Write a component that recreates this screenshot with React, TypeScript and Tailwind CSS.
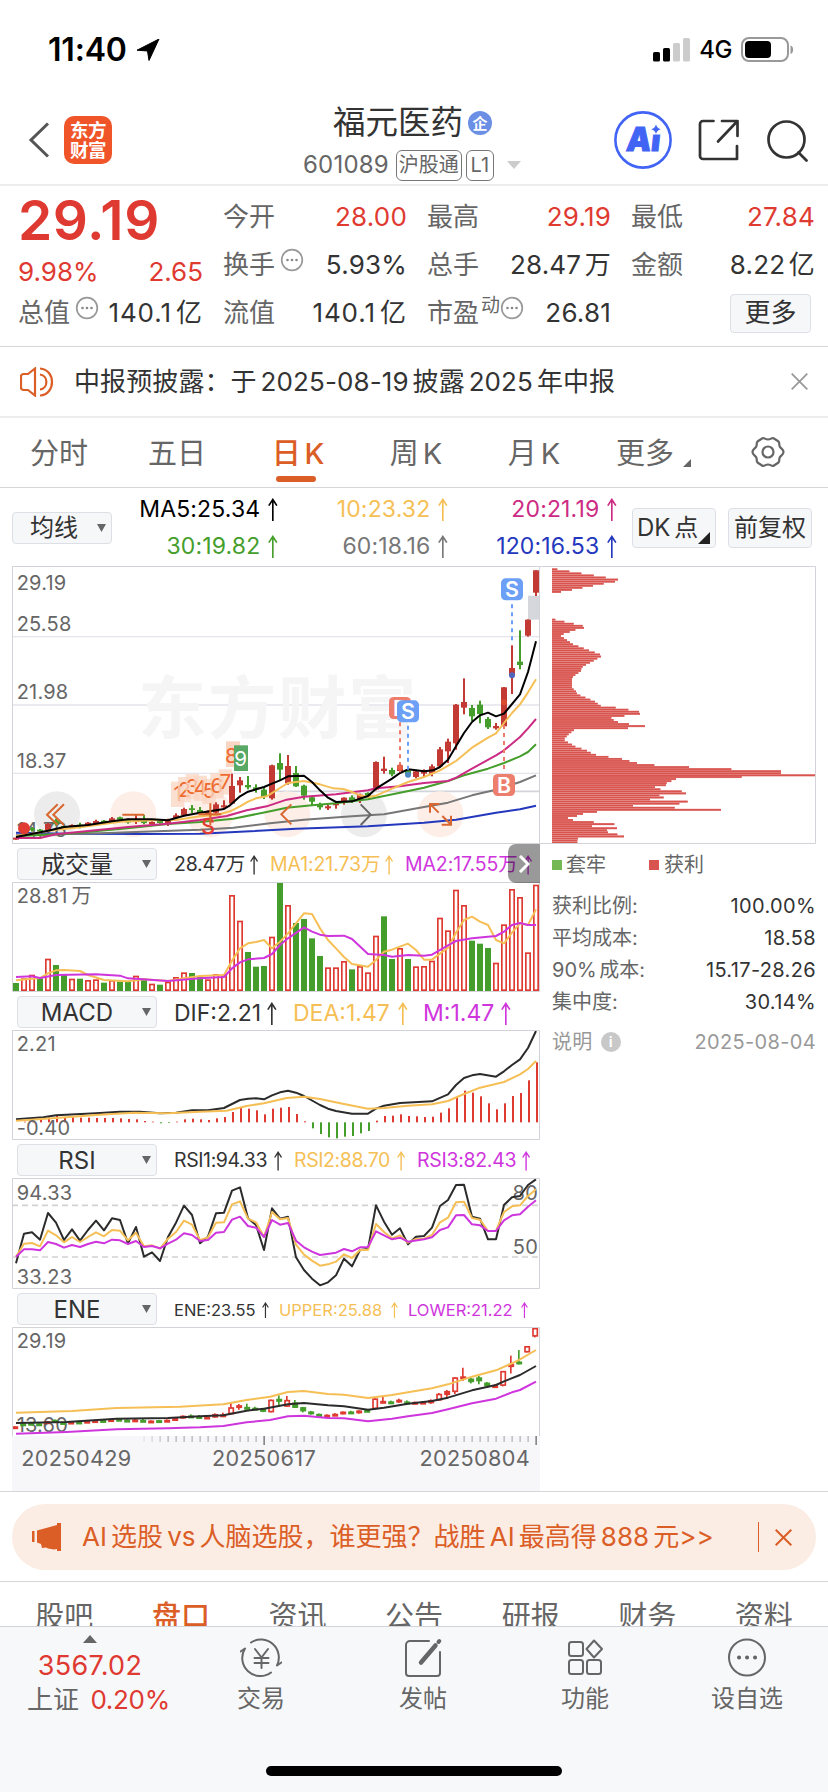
import React from "react";

type Point = [number, number];
// [high, bodyTop, bodyBottom, low, rising]
type Candle = [number, number, number, number, 0 | 1];

const FONT = "font-[Inter,'Noto_Sans_CJK_SC',sans-serif]";

// Every chart is drawn on a grid with one trading day per 24 units
const STEP = 24;
const FIRST_X = 48;

const RED = "#c23a33";
const BRIGHT_RED = "#df3a31";
const GREEN = "#459e2b";
const YELLOW = "#f5bf55";
const PURPLE = "#cf35dd";
const MAGENTA = "#cc2b83";
const BLUE = "#2438bd";

const candles: Candle[] = [
	[832, 832, 838, 838, 1], [806, 808, 813, 815, 0], [800, 804, 810, 814, 0], [806, 808, 813, 815, 0],
	[788, 791, 809, 810, 1], [775, 780, 792, 796, 0], [796, 797, 802, 804, 0], [792, 794, 800, 801, 1],
	[787, 793, 801, 804, 0], [785, 787, 794, 796, 1], [778, 782, 790, 792, 1], [779, 781, 786, 788, 0],
	[770, 774, 783, 786, 1], [769, 771, 778, 780, 0], [774, 778, 786, 790, 0], [764, 776, 785, 791, 1],
	[764, 780, 788, 792, 0], [783, 785, 792, 795, 1], [779, 782, 788, 790, 0], [775, 779, 791, 797, 1],
	[759, 765, 773, 776, 1], [742, 746, 765, 768, 1], [734, 744, 749, 758, 0], [740, 749, 758, 764, 0],
	[750, 753, 762, 764, 1], [726, 732, 757, 760, 1], [720, 735, 741, 746, 1], [640, 677, 730, 732, 1],
	[650, 660, 675, 697, 1], [647, 674, 681, 687, 0], [672, 681, 687, 697, 0], [680, 688, 710, 716, 0],
	[613, 615, 714, 718, 1], [579, 608, 628, 660, 0], [584, 617, 669, 673, 1], [617, 638, 678, 680, 0],
	[673, 676, 706, 718, 0], [706, 711, 724, 737, 0], [727, 731, 741, 748, 0], [734, 738, 744, 749, 1],
	[724, 730, 735, 745, 1], [711, 712, 728, 733, 1], [705, 711, 720, 728, 0], [700, 703, 722, 728, 1],
	[696, 698, 706, 712, 0], [603, 605, 688, 690, 1], [589, 625, 632, 640, 1], [622, 629, 642, 648, 0],
	[606, 615, 632, 640, 1], [620, 630, 645, 650, 0], [630, 633, 650, 654, 1], [627, 632, 640, 650, 1],
	[612, 618, 640, 648, 1], [560, 567, 618, 622, 1], [535, 544, 573, 608, 1], [431, 433, 549, 568, 1],
	[354, 425, 442, 462, 1], [434, 443, 468, 482, 0], [421, 433, 461, 489, 0], [470, 476, 501, 506, 0],
	[488, 497, 504, 508, 1], [380, 381, 498, 506, 1], [255, 323, 345, 401, 1], [210, 304, 314, 327, 0],
	[177, 178, 226, 229, 1], [30, 30, 97, 107, 1],
];

const ma5: Point[] = [[48, 830], [144, 811], [192, 800], [264, 794], [336, 783], [384, 777], [456, 777], [504, 780], [552, 766], [600, 757], [648, 750], [672, 746], [690, 735], [720, 708], [744, 694], [792, 680], [816, 670], [840, 660], [864, 648], [912, 646], [936, 665], [960, 690], [984, 712], [1008, 725], [1056, 723], [1104, 707], [1128, 685], [1176, 655], [1200, 638], [1224, 627], [1272, 633], [1300, 630], [1320, 620], [1344, 598], [1368, 558], [1392, 518], [1416, 485], [1440, 465], [1464, 457], [1488, 468], [1512, 460], [1560, 402], [1584, 335], [1608, 243]];
const ma10: Point[] = [[48, 828], [168, 808], [240, 801], [360, 784], [456, 780], [528, 779], [600, 768], [648, 765], [690, 753], [720, 738], [744, 724], [768, 714], [800, 708], [840, 683], [864, 668], [912, 662], [960, 672], [1000, 684], [1030, 686], [1056, 695], [1080, 705], [1104, 710], [1128, 706], [1176, 685], [1224, 665], [1272, 650], [1320, 630], [1368, 602], [1416, 562], [1464, 532], [1488, 519], [1512, 488], [1536, 458], [1560, 432], [1584, 396], [1608, 357]];
const ma20: Point[] = [[48, 833], [120, 833], [168, 822], [264, 812], [384, 800], [504, 790], [600, 779], [680, 767], [740, 750], [800, 738], [860, 718], [912, 709], [1008, 702], [1104, 690], [1128, 684], [1200, 678], [1272, 668], [1344, 662], [1370, 651], [1416, 625], [1488, 585], [1512, 570], [1560, 530], [1584, 504], [1608, 476]];
const ma30: Point[] = [[48, 828], [200, 820], [360, 806], [504, 791], [600, 785], [700, 775], [800, 755], [860, 742], [936, 735], [1008, 729], [1104, 717], [1200, 697], [1272, 682], [1344, 662], [1392, 645], [1464, 625], [1512, 608], [1560, 588], [1584, 575], [1608, 552]];
const ma60: Point[] = [[48, 825], [300, 819], [600, 808], [700, 802], [810, 789], [912, 778], [1056, 768], [1152, 762], [1272, 740], [1344, 727], [1416, 705], [1488, 688], [1560, 665], [1608, 645]];
const ma120: Point[] = [[48, 817], [200, 820], [430, 821], [600, 820], [750, 813], [888, 805], [1104, 798], [1272, 787], [1368, 778], [1488, 757], [1560, 747], [1608, 736]];

// [top, rising]
const volumes: [number, 0 | 1][] = [
	[429, 0], [415, 1], [404, 1], [415, 0], [356, 1], [375, 0], [404, 0], [416, 1], [416, 0], [420, 1], [418, 1],
	[428, 0], [420, 1], [425, 0], [426, 0], [407, 1], [416, 0], [431, 1], [434, 0], [425, 1], [411, 1], [397, 1],
	[399, 0], [410, 0], [418, 1], [402, 1], [404, 1], [165, 1], [242, 1], [336, 0], [380, 0], [378, 0], [290, 1],
	[128, 0], [195, 1], [249, 0], [237, 0], [295, 0], [348, 0], [382, 1], [382, 1], [363, 1], [388, 0], [378, 1],
	[397, 1], [287, 1], [229, 0], [357, 0], [324, 1], [357, 0], [379, 1], [378, 1], [362, 1], [233, 1], [271, 1],
	[149, 1], [195, 1], [302, 0], [311, 0], [324, 0], [368, 1], [253, 1], [147, 1], [171, 1], [337, 1], [134, 1],
];
const volMa1: Point[] = [[48, 421], [120, 414], [144, 400], [168, 391], [192, 390], [240, 393], [264, 405], [312, 420], [384, 424], [432, 418], [504, 423], [552, 415], [600, 408], [672, 405], [696, 362], [720, 325], [744, 310], [768, 306], [792, 300], [816, 325], [840, 305], [864, 280], [888, 250], [912, 220], [936, 222], [960, 265], [984, 300], [1008, 325], [1032, 351], [1056, 372], [1104, 380], [1128, 360], [1152, 335], [1176, 329], [1224, 311], [1248, 330], [1272, 359], [1296, 359], [1344, 323], [1368, 278], [1392, 240], [1416, 230], [1440, 245], [1464, 255], [1488, 300], [1512, 310], [1536, 278], [1560, 250], [1584, 255], [1608, 208]];
const volMa2: Point[] = [[48, 411], [96, 409], [120, 414], [168, 405], [288, 403], [360, 407], [384, 415], [504, 423], [600, 415], [672, 411], [696, 385], [720, 367], [744, 358], [792, 354], [816, 342], [840, 315], [864, 295], [912, 262], [936, 275], [960, 284], [984, 288], [1032, 287], [1056, 297], [1104, 342], [1152, 345], [1176, 350], [1224, 345], [1272, 347], [1296, 344], [1344, 316], [1368, 303], [1416, 295], [1488, 288], [1512, 275], [1536, 255], [1560, 249], [1584, 255], [1608, 255]];

const macdBars = [
	847, 845, 846, 840, 832, 828, 832, 832, 833, 833, 834, 834, 834, 835, 837, 838, 843, 845, 850, 849, 845, 838,
	836, 838, 840, 835, 831, 816, 804, 806, 811, 823, 806, 803, 801, 822, 844, 865, 882, 892, 895, 890, 888, 880,
	873, 842, 828, 827, 823, 828, 829, 831, 830, 818, 805, 770, 752, 758, 769, 790, 808, 790, 768, 759, 721, 667,
];
const dif: Point[] = [[48, 838], [130, 832], [168, 826], [288, 820], [360, 815], [420, 815], [480, 820], [528, 818], [576, 811], [624, 811], [672, 804], [720, 780], [744, 776], [768, 775], [792, 778], [816, 766], [840, 757], [864, 752], [888, 758], [912, 768], [960, 795], [984, 806], [1008, 813], [1056, 821], [1104, 821], [1128, 806], [1152, 797], [1200, 789], [1296, 784], [1344, 763], [1368, 735], [1392, 714], [1416, 706], [1440, 702], [1488, 710], [1512, 694], [1536, 675], [1560, 658], [1584, 624], [1608, 573]];
const dea: Point[] = [[48, 842], [168, 834], [288, 825], [400, 818], [504, 820], [600, 815], [680, 812], [740, 798], [792, 790], [860, 774], [912, 770], [960, 777], [1032, 792], [1104, 806], [1152, 804], [1224, 797], [1296, 793], [1344, 783], [1392, 762], [1440, 743], [1512, 726], [1560, 703], [1584, 687], [1608, 663]];

const rsi1: Point[] = [[48, 370], [72, 281], [96, 277], [120, 299], [144, 219], [168, 248], [192, 300], [216, 268], [240, 302], [264, 270], [288, 242], [312, 271], [336, 235], [360, 240], [384, 310], [408, 261], [432, 350], [456, 337], [480, 363], [504, 291], [528, 248], [552, 197], [576, 225], [600, 310], [624, 290], [648, 220], [672, 218], [696, 152], [720, 142], [744, 235], [768, 255], [792, 330], [816, 205], [840, 236], [864, 230], [888, 352], [912, 390], [936, 416], [960, 436], [984, 427], [1008, 406], [1032, 356], [1056, 379], [1080, 330], [1104, 327], [1128, 196], [1152, 245], [1176, 284], [1200, 265], [1224, 313], [1248, 290], [1272, 288], [1296, 263], [1320, 198], [1344, 180], [1368, 135], [1392, 134], [1416, 230], [1440, 236], [1464, 298], [1488, 298], [1512, 195], [1536, 172], [1560, 168], [1584, 135], [1608, 118]];
const rsi2: Point[] = [[48, 350], [72, 311], [96, 309], [120, 319], [144, 272], [168, 286], [192, 307], [216, 291], [240, 306], [264, 291], [288, 277], [312, 289], [336, 270], [360, 272], [384, 301], [408, 278], [432, 319], [456, 316], [480, 326], [504, 296], [528, 276], [552, 242], [576, 254], [600, 300], [624, 292], [648, 248], [672, 247], [696, 193], [720, 184], [744, 236], [768, 247], [792, 291], [816, 216], [840, 238], [864, 234], [888, 314], [912, 344], [936, 362], [960, 377], [984, 373], [1008, 365], [1032, 343], [1056, 354], [1080, 330], [1104, 330], [1128, 252], [1152, 276], [1176, 295], [1200, 286], [1224, 308], [1248, 297], [1272, 296], [1296, 285], [1320, 247], [1344, 233], [1368, 187], [1392, 185], [1416, 234], [1440, 239], [1464, 273], [1488, 272], [1512, 216], [1536, 199], [1560, 196], [1584, 168], [1608, 148]];
const rsi3: Point[] = [[48, 350], [72, 328], [96, 328], [120, 331], [144, 306], [168, 312], [192, 323], [216, 315], [240, 321], [264, 312], [288, 305], [312, 310], [336, 299], [360, 301], [384, 312], [408, 303], [432, 321], [456, 318], [480, 325], [504, 311], [528, 299], [552, 280], [576, 285], [600, 303], [624, 300], [648, 278], [672, 276], [696, 239], [720, 230], [744, 258], [768, 263], [792, 291], [816, 240], [840, 254], [864, 249], [888, 302], [912, 322], [936, 335], [960, 345], [1008, 338], [1032, 327], [1056, 334], [1080, 322], [1104, 321], [1128, 274], [1176, 298], [1200, 293], [1224, 305], [1272, 298], [1296, 292], [1320, 270], [1344, 262], [1368, 226], [1392, 225], [1416, 253], [1440, 256], [1464, 273], [1488, 273], [1512, 241], [1536, 226], [1560, 223], [1584, 200], [1608, 181]];

const eneUpper: Point[] = [[48, 818], [216, 813], [350, 804], [540, 800], [670, 793], [740, 780], [810, 770], [864, 756], [912, 753], [984, 762], [1032, 764], [1104, 774], [1176, 765], [1224, 757], [1296, 745], [1344, 733], [1416, 710], [1488, 691], [1536, 670], [1560, 658], [1608, 630]];
const eneMid: Point[] = [[48, 849], [200, 846], [350, 836], [504, 834], [600, 829], [670, 826], [740, 812], [792, 806], [864, 793], [912, 789], [984, 796], [1032, 799], [1104, 809], [1152, 803], [1224, 791], [1296, 783], [1344, 773], [1416, 751], [1488, 735], [1512, 724], [1560, 705], [1608, 678]];
const eneLower: Point[] = [[48, 881], [200, 876], [350, 868], [504, 865], [600, 862], [670, 858], [740, 847], [810, 840], [864, 829], [912, 827], [984, 834], [1032, 835], [1104, 844], [1176, 836], [1224, 829], [1296, 819], [1344, 808], [1416, 790], [1488, 776], [1536, 757], [1560, 750], [1608, 725]];

// Cost distribution, grouped by price range
const chips = [
	{ y: 24, rows: [16, 52, 88, 125, 161, 198, 189, 155, 123, 91, 60, 27] },
	{ y: 175, rows: [10, 37, 65, 92, 96, 70, 53, 35, 27, 36, 45, 54, 63, 79, 95, 111, 128, 144, 147, 136, 125, 114, 102, 92, 88, 87, 79, 70, 63, 60, 60, 60, 60, 60, 65, 72, 75, 85, 100, 115, 129, 137, 146] },
	{ y: 439, rows: [191, 229, 261, 264, 217, 178, 185, 198, 231, 279, 228, 66, 58, 50, 44, 38, 38, 48, 60, 70, 88, 105, 116, 132, 169, 210, 232, 255, 307, 411, 538, 687, 687, 789] },
	{ y: 647, rows: [569, 372, 358, 344, 342, 309, 325, 389, 402, 322, 335, 294, 407, 382, 243, 368, 507, 135, 93, 75, 48, 63, 125, 187, 120, 195, 165, 168, 196, 216, 78, 76, 76] },
];

const quotes = [
	[
		{ label: "今开", value: "28.00", up: true },
		{ label: "最高", value: "29.19", up: true },
		{ label: "最低", value: "27.84", up: true },
	],
	[
		{ label: "换手", value: "5.93%", dots: true },
		{ label: "总手", value: "28.47 万" },
		{ label: "金额", value: "8.22 亿" },
	],
	[
		{ label: "流值", value: "140.1 亿" },
		{ label: "市盈", value: "26.81", dots: true, sup: "动" },
	],
];

const periods = ["分时", "五日", "日 K", "周 K", "月 K", "更多"];
const sections = ["股吧", "盘口", "资讯", "公告", "研报", "财务", "资料"];

const stats = [
	["获利比例:", "100.00%"],
	["平均成本:", "18.58"],
	["90% 成本:", "15.17-28.26"],
	["集中度:", "30.14%"],
];

export default function App() {
	return (
		<div className={`w-[828px] h-[1792px] overflow-hidden bg-white flex flex-col leading-none text-[#333] whitespace-nowrap ${FONT}`}>
			<StatusBar />
			<Header />
			<Quote />
			<Notice />
			<PeriodTabs />
			<Averages />
			<div className="flex h-[925px] pl-3 shrink-0">
				<div className="w-[528px] flex flex-col shrink-0">
					<MainChart />
					<IndicatorBar name="成交量" collapse>
						<Reading text="28.47万" className="w-[84px] text-[19.5px] tracking-[-0.2px]" />
						<Reading text="MA1:21.73万" className="w-[123px] ml-3 text-[19.5px] text-[#f5bf55] tracking-[-0.1px]" />
						<Reading text="MA2:17.55万" className="w-[127px] ml-3 text-[19.5px] text-[#cf35dd] tracking-[-0.1px]" />
					</IndicatorBar>
					<VolumeChart />
					<IndicatorBar name="MACD">
						<Reading text="DIF:2.21" className="w-[103px] text-[23px]" />
						<Reading text="DEA:1.47" className="w-[115px] ml-[16px] text-[23px] text-[#f5bf55]" />
						<Reading text="M:1.47" className="w-[88px] ml-[15px] text-[23px] text-[#cf35dd]" />
					</IndicatorBar>
					<MacdChart />
					<IndicatorBar name="RSI">
						<Reading text="RSI1:94.33" className="w-[108px] text-[19.5px] tracking-[-0.4px]" />
						<Reading text="RSI2:88.70" className="w-[111px] ml-[12px] text-[19.5px] text-[#f5bf55] tracking-[-0.4px]" />
						<Reading text="RSI3:82.43" className="w-[113px] ml-[12px] text-[19.5px] text-[#cf35dd] tracking-[-0.3px]" />
					</IndicatorBar>
					<RsiChart />
					<IndicatorBar name="ENE">
						<Reading text="ENE:23.55" className="w-[95px] text-[16.5px]" />
						<Reading text="UPPER:25.88" className="w-[119px] ml-[10px] text-[16.5px] text-[#f5bf55]" />
						<Reading text="LOWER:21.22" className="w-[120px] ml-[10px] text-[16.5px] text-[#cf35dd]" />
					</IndicatorBar>
					<EneChart />
				</div>
				<ChipPanel />
			</div>
			<div className="h-[91px] shrink-0 border-y border-[#d6d6da] pt-[12px] px-3">
				<div className="h-[66px] rounded-[33px] bg-[#fbece4] text-[#db5e26] flex items-center pl-5 pr-6">
					<svg width="30" height="28" viewBox="0 0 30 28" fill="#db5e26">
						<path d="M0 8h2.5v11H0zM5 7.5 25 2V0h4v28h-4v-2l-3 .5-6-1-2-1-4 .5-1-4-4-1.5z" />
					</svg>
					<span className="ml-5 text-[26px] [word-spacing:-3.2px]">AI 选股 vs 人脑选股，谁更强？战胜 AI 最高得 888 元&gt;&gt;</span>
					<span className="w-[1.5px] h-[30px] bg-[#db5e26] ml-auto mr-4" />
					<Close size={17} width={2} />
				</div>
			</div>
			<div className="h-[44px] shrink-0 overflow-hidden pl-[6px] pt-[20px] flex text-[29px] text-[#666]">
				{sections.map((name) => (
					<span key={name} className={`w-[116.6px] text-center ${name === "盘口" ? "text-[#db5e26] font-medium" : ""}`}>
						{name}
					</span>
				))}
			</div>
			<BottomBar />
		</div>
	);
}

function StatusBar() {
	return (
		<div className="h-[94px] shrink-0 flex items-center pl-12 pr-[34px] pt-[6px] text-black">
			<span className="text-[32px] font-semibold tracking-[-0.2px]">11:40</span>
			<svg className="ml-[9px]" width="24" height="22" viewBox="0 0 24 22">
				<path d="M23 0 13 21.5 11.5 12 1 11.2z" stroke="#000" strokeLinejoin="round" />
			</svg>
			<svg className="ml-auto" width="38" height="24" viewBox="0 0 38 24">
				<rect y="14" width="7" height="9.5" rx="1.6" />
				<rect x="10" y="10" width="7" height="13.5" rx="1.6" />
				<rect x="20" y="5" width="7" height="18.5" rx="1.6" fill="#ccc" />
				<rect x="30" y="0" width="7" height="23.5" rx="1.6" fill="#ccc" />
			</svg>
			<span className="ml-2 text-[24px] font-medium tracking-[-0.5px]">4G</span>
			<svg className="ml-[9px]" width="53" height="26" viewBox="0 0 53 26">
				<rect x="1" y="1" width="46" height="23" rx="7" fill="none" stroke="#999" strokeWidth="2" />
				<rect x="4" y="4" width="26" height="17" rx="4" />
				<path d="M49.5 8.5c3.5 1 3.5 7.5 0 8.5z" fill="#999" />
			</svg>
		</div>
	);
}

function Header() {
	return (
		<div className="h-[92px] shrink-0 relative flex items-center border-b-2 border-[#ececec] pt-[2px]">
			<svg className="ml-[28px]" width="22" height="36" viewBox="0 0 22 36" fill="none" stroke="#555" strokeWidth="3">
				<path d="M20 1.5 3 18l17 16.5" />
			</svg>
			<div className="ml-[14px] size-[48px] rounded-[10px] bg-[#f0552a] text-white text-[18.5px] font-bold leading-[20px] tracking-[-0.5px] text-center pt-[4px]">
				东方<br />财富
			</div>
			<div className="absolute left-[303px] top-[12px] flex flex-col">
				<div className="flex items-center ml-[30px] h-[34px]">
					<span className="text-[32.5px]">福元医药</span>
					<span className="ml-[5px] size-6 rounded-full bg-[#6c8fe6] text-white text-[15px] font-bold flex items-center justify-center">企</span>
				</div>
				<div className="flex items-center h-[32px] mt-[9px] text-[#666]">
					<span className="text-[24px] tracking-[0.2px]">601089</span>
					<span className="ml-[7px] h-[31px] w-[66px] border-[1.5px] border-[#777] rounded-md text-[20px] flex items-center justify-center">沪股通</span>
					<span className="ml-[4px] h-[31px] w-[28px] border-[1.5px] border-[#777] rounded-md text-[20px] flex items-center justify-center">L1</span>
					<svg className="ml-[13px]" width="14" height="8" viewBox="0 0 14 8"><path d="M0 0h14L7 8z" fill="#ccc" /></svg>
				</div>
			</div>
			<svg className="ml-auto" width="60" height="60" viewBox="0 0 60 60">
				<circle cx="30" cy="30" r="27.6" fill="none" stroke="#4164f5" strokeWidth="2.6" />
				<text x="0" y="0" transform="translate(12.500 41) skewX(-6)" fontSize="33" fontWeight="900" fill="#4164f5" stroke="#4164f5" strokeWidth="1" textLength="34" lengthAdjust="spacingAndGlyphs">Ai</text>
				<rect x="36" y="13" width="14" height="11.500" fill="#fff" />
				<path d="M43 14.500c.9 2.800 1.900 3.800 4.700 4.700-2.800.9-3.800 1.900-4.700 4.700-.9-2.800-1.900-3.800-4.700-4.700 2.800-.9 3.800-1.900 4.700-4.700z" fill="#4164f5" />
			</svg>
			<svg className="ml-[25px]" width="42" height="42" viewBox="0 0 42 42" fill="none" stroke="#333" strokeWidth="2.700" strokeLinecap="round" strokeLinejoin="round">
				<path d="M15.500 2H5a3 3 0 0 0-3 3v32a3 3 0 0 0 3 3h34V27M24 2h15.500v15M39 2.500 20 22.500" />
			</svg>
			<svg className="ml-[26px] mr-[19px]" width="43" height="43" viewBox="0 0 43 43" fill="none" stroke="#333" strokeWidth="2.700" strokeLinecap="round">
				<circle cx="20.500" cy="20.500" r="18" />
				<path d="m32.500 33.500 8 8" />
			</svg>
		</div>
	);
}

function Dots() {
	return (
		<svg className="ml-[5px] -mt-[10px] shrink-0" width="24" height="24" viewBox="0 0 24 24">
			<circle cx="12" cy="12" r="10.300" fill="none" stroke="#999" strokeWidth="1.700" />
			<g fill="#888"><circle cx="7.500" cy="12" r="1.300" /><circle cx="12" cy="12" r="1.300" /><circle cx="16.500" cy="12" r="1.300" /></g>
		</svg>
	);
}

function Quote() {
	return (
		<div className="h-[161px] shrink-0 border-b border-[#d6d6da] pt-[7px] pl-[18px] pr-[13px] grid grid-cols-[185px_592px] gap-5 text-[26px] [word-spacing:-4px]">
			<div className="flex flex-col">
				<span className="h-[55px] flex items-center text-[55px] font-semibold text-[#df3a31] tracking-[0.600px]">29.19</span>
				<div className="flex justify-between h-[48px] items-center text-[#df3a31]">
					<span>9.98%</span>
					<span>2.65</span>
				</div>
				<div className="flex h-[34px] items-center">
					<span className="text-[#666]">总值</span>
					<Dots />
					<span className="ml-auto tracking-[0.900px]">140.1 亿</span>
				</div>
			</div>
			<div className="flex flex-col">
				{quotes.map((row, i) => (
					<div key={i} className="h-12 grid grid-cols-3 gap-5">
						{row.map((cell) => (
							<div key={cell.label} className="flex items-center">
								<span className="text-[#666]">{cell.label}</span>
								{cell.sup && <span className="text-[19px] text-[#666] ml-[2px] -mt-4 -mr-[5px]">{cell.sup}</span>}
								{cell.dots && <Dots />}
								<span className={`ml-auto ${cell.label === "流值" ? "tracking-[0.900px]" : "tracking-[0.200px]"} ${cell.up ? "text-[#df3a31]" : ""}`}>{cell.value}</span>
							</div>
						))}
						{row.length < 3 && (
							<div className="w-[81px] h-[39px] mr-1 ml-auto self-center rounded border border-[#dcdfe6] bg-[#f6f7f9] flex items-center justify-center">更多</div>
						)}
					</div>
				))}
			</div>
		</div>
	);
}

function Close({ size, width }: { size: number; width: number }) {
	return (
		<svg width={size} height={size} viewBox="0 0 17 17" stroke="currentColor" strokeWidth={width}>
			<path d="m.7.7 15.600 15.600M16.300.7.7 16.300" />
		</svg>
	);
}

function Notice() {
	return (
		<div className="h-[71px] shrink-0 border-b-2 border-[#ececec] flex items-center pl-5 pr-5">
			<svg width="34" height="30" viewBox="0 0 34 30" fill="none" stroke="#db5e26" strokeWidth="2.200">
				<path d="M15 1.500v27L8 23H3.500A2.500 2.500 0 0 1 1 20.500v-11A2.500 2.500 0 0 1 3.500 7H8zM20 1.500c16 1 16 26 0 27M20 7.500c8.500 1 8.500 14 0 15" />
			</svg>
			<span className="ml-5 text-[26px] tracking-[0.100px] [word-spacing:-3.5px]">中报预披露：于 2025-08-19 披露 2025 年中报</span>
			<span className="ml-auto text-[#999]"><Close size={17} width={1.8} /></span>
		</div>
	);
}

function PeriodTabs() {
	return (
		<div className="h-[70px] shrink-0 border-b border-[#d6d6da] flex text-[29px] text-[#666] [word-spacing:-4px]">
			{periods.map((name) => (
				<div key={name} className={`w-[118px] relative flex items-center justify-center pt-[1px] ${name.endsWith("K") ? "pl-[6px]" : ""} ${name === "日 K" ? "text-[#db5e26] font-medium" : ""}`}>
					<span className={name === "更多" ? "-ml-2" : ""}>{name}</span>
					{name === "日 K" && <span className="absolute bottom-[5px] left-[40px] w-10 h-[6px] rounded-[3px] bg-[#db5e26]" />}
					{name === "更多" && (
						<svg className="absolute right-[17px] bottom-[20px]" width="8" height="8"><path d="M8 0v8H0z" fill="#666" /></svg>
					)}
				</div>
			))}
			<div className="w-[120px] flex items-center justify-center pb-[2px]">
				<svg width="34" height="32" viewBox="0 0 34 32" fill="none" stroke="#666" strokeWidth="2.200" strokeLinejoin="round">
					<path d="M11 2.500c2-1.500 3 1 6 1s4-2.500 6-1l4.500 3c1.500 1.500 0 3.500 1.500 5.500s3.500 2.500 3.500 5-2 3-3.500 5 0 4-1.500 5.500l-4.500 3c-2 1.500-3-1-6-1s-4 2.500-6 1l-4.500-3C5 25 6.500 23 5 21s-3.500-2.500-3.500-5 2-3 3.500-5 0-4 1.500-5.500z" />
					<circle cx="17" cy="16" r="5.500" />
				</svg>
			</div>
		</div>
	);
}

function Arrow() {
	return (
		<svg className="h-[1em] w-[0.42em] shrink-0" viewBox="0 0 10 24" fill="none" stroke="currentColor" strokeWidth="1.700">
			<path d="M5 24V1.500M.8 8 5 1.500 9.200 8" />
		</svg>
	);
}

function Reading({ text, className }: { text: string; className: string }) {
	return (
		<span className={`flex items-center justify-between shrink-0 pt-[2px] ${className}`}>
			<span>{text}</span>
			<Arrow />
		</span>
	);
}

function Averages() {
	return (
		<div className="h-[78px] shrink-0 flex items-center pl-3 pr-4 relative pt-[1px]">
			<div className="w-[100px] h-[32px] border border-[#dcdfe6] rounded bg-[#f6f7f9] flex items-center pl-[17px] pr-[5px] justify-between text-[24px]">
				均线
				<svg width="9" height="8"><path d="M0 0h9L4.500 8z" fill="#666" /></svg>
			</div>
			<div className="grid grid-cols-[166px_170px_169px] h-full pt-[2px] pb-[1px] text-[23px] tracking-[0.15px]">
				<Average text="MA5:25.34" className="text-black" />
				<Average text="10:23.32" className="text-[#f5bf55]" />
				<Average text="20:21.19" className="text-[#cc2b83]" />
				<Average text="30:19.82" className="text-[#459e2b]" />
				<Average text="60:18.16" className="text-[#777]" />
				<Average text="120:16.53" className="text-[#2438bd]" />
			</div>
			<div className="ml-auto relative w-[84px] h-[40px] border border-[#dcdfe6] rounded bg-[#f6f7f9] flex items-center pl-1 text-[24px] [word-spacing:-3px]">
				DK 点
				<svg className="absolute right-[5px] bottom-[3px]" width="12" height="12"><path d="M12 0v12H0z" fill="#222" /></svg>
			</div>
			<div className="ml-3 w-[84px] h-[40px] border border-[#dcdfe6] rounded bg-[#f6f7f9] flex items-center justify-center text-[24px]">前复权</div>
		</div>
	);
}

function Average({ text, className }: { text: string; className: string }) {
	return (
		<div className={`flex items-center justify-end gap-[8px] ${className}`}>
			<span>{text}</span>
			<Arrow />
		</div>
	);
}

function IndicatorBar({ name, collapse, children }: { name: string; collapse?: boolean; children: React.ReactNode }) {
	return (
		<div className="flex items-center h-[38px] shrink-0 pl-[5px] pt-[2px] relative">
			<div className="w-[140px] h-[32px] shrink-0 border border-[#dcdfe6] rounded bg-[#f6f7f9] text-[24px] relative flex items-center justify-center pr-5 pt-[1px] mr-[17px]">
				{name}
				<svg className="absolute right-[5px] top-[11px]" width="9" height="8"><path d="M0 0h9L4.500 8z" fill="#666" /></svg>
			</div>
			{children}
			{collapse && (
				<div className="absolute right-0 top-0 w-8 h-[39px] rounded-l-lg bg-black/40 flex items-center justify-center">
					<svg width="12" height="18" viewBox="0 0 12 18" fill="none" stroke="#fff" strokeWidth="3"><path d="m2 1 8 8-8 8" /></svg>
				</div>
			)}
		</div>
	);
}

function Line({ points, color, width = 6 }: { points: Point[]; color: string; width?: number }) {
	return <polyline points={points.join(" ")} fill="none" stroke={color} strokeWidth={width} strokeLinejoin="round" />;
}

function Label({ x, y, children, end }: { x: number; y: number; children: string; end?: boolean }) {
	return (
		<text x={x} y={y} fontSize="60" fill="#666" wordSpacing="-6" letterSpacing="0.6" textAnchor={end ? "end" : "start"}>{children}</text>
	);
}

function Marker({ x, y, label, color }: { x: number; y: number; label: string; color: string }) {
	return (
		<g>
			<rect x={x - 33} y={y - 33} width="66" height="66" rx="14" fill={color} />
			<text x={x} y={y + 23} fontSize="64" fontWeight="600" fill="#fff" textAnchor="middle">{label}</text>
		</g>
	);
}

function MainChart() {
	const counts = [[533, 701], [554, 687], [577, 678], [601, 683], [627, 692], [651, 675], [676, 664]];
	return (
		<svg className="shrink-0" width="528" height="278" viewBox="36 17 1584 834">
			<g fill="none" stroke="#e4e4ec" strokeWidth="4">
				<path d="M36 229H1620M36 434H1620M36 639H1620" />
				<path d="M810 693H1620" stroke="#d2d4da" strokeWidth="5" />
			</g>
			<text x="414" y="518" fontSize="205" fontWeight="700" fill="#f5f5f6" letterSpacing="5">东方财富</text>
			<circle cx="171" cy="762" r="69" fill="#ececec" />
			<circle cx="400" cy="762" r="69" fill="#fdeee7" />
			<circle cx="630" cy="762" r="69" fill="#fdeee7" />
			<circle cx="862" cy="762" r="69" fill="#fdeee7" />
			<circle cx="1092" cy="762" r="69" fill="#ececec" />
			<circle cx="1321" cy="762" r="69" fill="#fdeee7" />
			<Label x={50} y={88}>29.19</Label>
			<Label x={50} y={211}>25.58</Label>
			<Label x={50} y={417}>21.98</Label>
			<Label x={50} y={623}>18.37</Label>
			<Label x={50} y={829}>14.76</Label>
			<rect x="1584" y="106" width="36" height="72" fill="#d6d7dd" />
			{counts.map(([x, y], i) => (
				<g key={i}>
					<rect x={x - 20} y={y - 37} width="40" height="76" fill="#f9d5c3" opacity="0.75" />
					<text x={x} y={y + 22} fontSize="62" fill="#ee6a30" textAnchor="middle">{i + 1}</text>
				</g>
			))}
			<rect x="678" y="543" width="42" height="77" fill="#f9d5c3" />
			<text x="694" y="607" fontSize="62" fill="#ee6a30" textAnchor="middle">8</text>
			{candles.map(([high, top, bottom, low, up], i) => {
				const x = FIRST_X + i * STEP;
				const color = up ? RED : GREEN;
				return (
					<g key={i} fill={color}>
						<rect x={x - 3} y={high} width="6" height={low - high} />
						<rect x={x - 9} y={top} width="18" height={bottom - top} />
					</g>
				);
			})}
			<rect x="702" y="555" width="42" height="77" fill="#58a866" />
			<text x="722" y="616" fontSize="62" fill="#fff" textAnchor="middle">9</text>
			<Line points={ma120} color={BLUE} />
			<Line points={ma60} color="#777" />
			<Line points={ma30} color={GREEN} />
			<Line points={ma20} color={MAGENTA} />
			<Line points={ma10} color={YELLOW} />
			<Line points={ma5} color="#000" />
			<circle cx="72" cy="804" r="18" fill="#e03c31" />
			<text x="624" y="822" fontSize="66" fontWeight="500" fill="#e03c31" textAnchor="middle">S</text>
			<g fill="none" stroke="#d9672f" strokeWidth="6">
				<path d="m173 732-32 31 32 31M192 732l-32 31 32 31M367 763h66M595 762h69M631 729v66M874 732l-30 30 30 30" />
				<path d="M1290 757v-26h28M1292 733l24 24M1353 766v27h-28M1351 791l-24-24" />
				<path d="m1082 732 30 31-30 31" stroke="#666" />
			</g>
			<g fill="none" strokeWidth="6" strokeDasharray="12 12">
				<path d="M1200 486v150M1512 494v140" stroke="#ee7a68" />
				<path d="M1224 496v150M1536 132v120" stroke="#6b9ff5" />
			</g>
			<circle cx="1200" cy="621" r="9" fill="#e8604c" />
			<circle cx="1224" cy="643" r="9" fill="#4d87c4" />
			<circle cx="1512" cy="426" r="9" fill="#dc4a30" />
			<circle cx="1536" cy="345" r="9" fill="#5064bd" />
			<Marker x={1200} y={443} label="B" color="#ed7d6c" />
			<Marker x={1224} y={453} label="S" color="#6c9ff6" />
			<Marker x={1536} y={87} label="S" color="#6c9ff6" />
			<Marker x={1512} y={674} label="B" color="#ed7d6c" />
			<path d="M37.500 18.500H1618.500V849.500H37.500z" fill="none" stroke="#d2d2d8" strokeWidth="3" />
		</svg>
	);
}

function VolumeChart() {
	return (
		<svg className="shrink-0" width="528" height="110" viewBox="36 126 1584 330">
			{volumes.map(([top, up], i) => {
				const x = FIRST_X + i * STEP;
				return up ? (
					<rect key={i} x={x - 6.5} y={top + 2.5} width="13" height={448 - top} fill="#fff" stroke={BRIGHT_RED} strokeWidth="5" />
				) : (
					<rect key={i} x={x - 9} y={top} width="18" height={453 - top} fill={GREEN} />
				);
			})}
			<Line points={volMa1} color={YELLOW} />
			<Line points={volMa2} color={PURPLE} />
			<Label x={50} y={190}>28.81 万</Label>
			<path d="M37.500 127.500H1618.500V454.500H37.500z" fill="none" stroke="#d2d2d8" strokeWidth="3" />
		</svg>
	);
}

function MacdChart() {
	return (
		<svg className="shrink-0" width="528" height="110" viewBox="36 570 1584 330">
			{macdBars.map((y, i) => (
				<rect
					key={i}
					x={FIRST_X + i * STEP}
					y={Math.min(y, 847)}
					width="6"
					height={Math.abs(y - 847)}
					fill={y > 847 ? GREEN : BRIGHT_RED}
				/>
			))}
			<Line points={dif} color="#2b2b2b" />
			<Line points={dea} color={YELLOW} />
			<Label x={50} y={634}>2.21</Label>
			<Label x={50} y={886}>-0.40</Label>
			<path d="M37.500 571.500H1618.500V898.500H37.500z" fill="none" stroke="#d2d2d8" strokeWidth="3" />
		</svg>
	);
}

function RsiChart() {
	return (
		<svg className="shrink-0" width="528" height="111" viewBox="36 114 1584 333">
			<path d="M36 196H1620M36 351H1620" stroke="#d2d2d2" strokeWidth="5" strokeDasharray="18 12" />
			<Label x={50} y={179}>94.33</Label>
			<Label x={50} y={431}>33.23</Label>
			<Label x={1614} y={181} end>80</Label>
			<Label x={1614} y={341} end>50</Label>
			<Line points={rsi1} color="#2b2b2b" />
			<Line points={rsi2} color={YELLOW} />
			<Line points={rsi3} color={PURPLE} />
			<path d="M37.500 115.500H1618.500V445.500H37.500z" fill="none" stroke="#d2d2d8" strokeWidth="3" />
		</svg>
	);
}

function EneChart() {
	// Same candles as the main chart, squeezed into this panel
	const scale = (y: number) => 564 + (y - 30) * 0.368;
	return (
		<svg className="shrink-0" width="528" height="164" viewBox="36 561 1584 492">
			<rect x="36" y="888" width="1584" height="170" fill="#f7f7fa" />
			<Label x={50} y={623}>29.19</Label>
			<Label x={50} y={875}>13.60</Label>
			{candles.map(([high, top, bottom, low, up], i) => {
				const x = FIRST_X + i * STEP - 3;
				const color = up ? BRIGHT_RED : GREEN;
				const h = Math.max(scale(bottom) - scale(top), 7);
				return (
					<g key={i}>
						<rect x={x - 3} y={scale(high)} width="5" height={scale(low) - scale(high)} fill={color} />
						<rect x={x - 6} y={scale(top) + 2} width="13" height={h - 3} fill={up && h > 12 ? "#fff" : color} stroke={color} strokeWidth="5" />
					</g>
				);
			})}
			<Line points={eneUpper} color={YELLOW} />
			<Line points={eneMid} color="#2b2b2b" />
			<Line points={eneLower} color={PURPLE} />
			{candles.map((_, i) => {
				if (i < 16) return null;
				const major = i === 31 || i === 65;
				return (
					<rect
						key={i}
						x={FIRST_X + i * STEP - 2}
						y="888"
						width="5"
						height={major ? 27 : 18}
						fill={major ? "#888" : "#c4c4c8"}
						opacity={Math.min(1, (i - 15) / 4)}
					/>
				);
			})}
			<path d="M37.500 888V562.500H1618.500V888" fill="none" stroke="#d2d2d8" strokeWidth="3" />
			<g fontSize="65" fill="#666" letterSpacing="1">
				<text x="64" y="979">20250429</text>
				<text x="636" y="979">20250617</text>
				<text x="1590" y="979" textAnchor="end">20250804</text>
			</g>
		</svg>
	);
}

function ChipPanel() {
	return (
		<div className="flex-1 flex flex-col pr-[13px]">
			<svg className="shrink-0" width="276" height="278" viewBox="0 17 828 834">
				{chips.map((group) =>
					group.rows.map((w, i) => (
						<g key={`${group.y}-${i}`}>
							<rect x="36" y={group.y + i * 6.15} width={w} height="6.150" fill="#e58f8b" />
							<rect x="36" y={group.y + i * 6.15 + 0.5} width={w} height="4.800" fill="#d9544f" />
						</g>
					))
				)}
				<path d="M0 18.500H826.500V849.500H0" fill="none" stroke="#d2d2d8" strokeWidth="3" />
			</svg>
			<div className="pl-3 flex flex-col text-[20px] text-[#666] tracking-[0.350px]">
				<div className="flex items-center h-[42px] tracking-normal">
					<span className="size-[10px] bg-[#74b755] mr-1" />套牢
					<span className="size-[10px] bg-[#d9544f] ml-[43px] mr-[5px]" />获利
				</div>
				<div className="pt-[4px]">
					{stats.map(([label, value]) => (
						<div key={label} className="flex items-center justify-between h-8 [word-spacing:-3px]">
							<span className="tracking-normal">{label}</span>
							<span className="text-[#333]">{value}</span>
						</div>
					))}
				</div>
				<div className="flex items-center h-12 text-[#999]">
					说明
					<span className="ml-2 size-5 rounded-full bg-[#c8c8c8] text-white text-[14px] font-bold flex items-center justify-center">i</span>
					<span className="ml-auto">2025-08-04</span>
				</div>
			</div>
		</div>
	);
}

function BottomBar() {
	return (
		<div className="h-[166px] shrink-0 border-t border-[#d0d3da] bg-[#f7f8fa] flex relative text-[#666] text-[24px]">
			<div className="w-[180px] flex flex-col items-center pt-[8px]">
				<svg width="14" height="8"><path d="M0 8 7 0l7 8z" fill="#666" /></svg>
				<span className="mt-[9px] text-[27px] text-[#df3a31] tracking-[0.300px]">3567.02</span>
				<span className="mt-[8px] ml-[17px] text-[26px]">上证 <span className="text-[#df3a31] ml-[4px] tracking-[-0.300px]">0.20%</span></span>
			</div>
			<NavItem label="交易">
				<path d="M11 5.500A18 18 0 0 1 37 28.500l4.500-3M31 35.500A18 18 0 0 1 5 11.500l-4.500 3" />
				<path d="m15 12 6.500 8.500L28 12M21.500 20.500V31M14.500 21h14M14.500 26h14" />
			</NavItem>
			<NavItem label="发帖">
				<path d="M27 4H8a4 4 0 0 0-4 4v28a3 3 0 0 0 3 3h28a3 3 0 0 0 3-3V15" />
				<path d="M33.500 8.500 19 25.500" strokeWidth="4.500" />
				<path d="m36.500 5 .8-1" strokeWidth="4" />
			</NavItem>
			<NavItem label="功能">
				<rect x="5" y="5" width="14" height="14" rx="2.500" />
				<rect x="5" y="23" width="14" height="14" rx="2.500" />
				<rect x="23" y="23" width="14" height="14" rx="2.500" />
				<path d="m30 3.500 8 8.500-8 8.500-7.500-8.500z" />
			</NavItem>
			<NavItem label="设自选">
				<circle cx="21" cy="20.500" r="18" />
				<path d="M13 20.500h.1M21 20.500h.1M29 20.500h.1" strokeWidth="4" />
			</NavItem>
			<div className="absolute left-[266px] bottom-[16px] w-[296px] h-[10px] rounded-full bg-black" />
		</div>
	);
}

function NavItem({ label, children }: { label: string; children: React.ReactNode }) {
	return (
		<div className="w-[162px] flex flex-col items-center pt-[10px]">
			<svg width="42" height="42" viewBox="0 0 42 42" fill="none" stroke="#666" strokeWidth="2" strokeLinecap="round" strokeLinejoin="round">
				{children}
			</svg>
			<span className="mt-[8px]">{label}</span>
		</div>
	);
}
